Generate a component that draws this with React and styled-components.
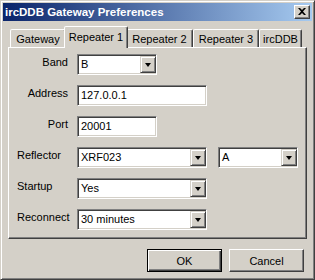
import React from 'react';
import styled, { createGlobalStyle } from 'styled-components';

const Global = createGlobalStyle`
  html, body { margin: 0; padding: 0; background: #d4d0c8; }
  * { box-sizing: border-box; }
`;

const Window = styled.div`
  width: 315px;
  height: 280px;
  background: #d4d0c8;
  border: 1px solid;
  border-color: #d4d0c8 #404040 #404040 #d4d0c8;
  box-shadow: inset 1px 1px #fff, inset -1px -1px #808080;
  padding: 2px;
  display: flex;
  flex-direction: column;
  font-family: "Liberation Sans", Arial, sans-serif;
  font-size: 11px;
  color: #000;
`;

const TitleBar = styled.div`
  height: 18px;
  display: flex;
  align-items: center;
  justify-content: space-between;
  padding: 0 2px;
  background: linear-gradient(to right, #0a246a, #a6caf0);
  color: #fff;
  font-weight: bold;
  font-size: 11.5px;
  flex-shrink: 0;
`;

const CloseButton = styled.div`
  width: 16px;
  height: 14px;
  background: #d4d0c8;
  border: 1px solid;
  border-color: #fff #404040 #404040 #fff;
  box-shadow: inset -1px -1px #808080;
  display: flex;
  align-items: center;
  justify-content: center;
  padding: 0 1px 1px 0;
`;

const Body = styled.div`
  flex: 1;
  padding: 5px 5px 0 5px;
  display: flex;
  flex-direction: column;
`;

const TabRow = styled.div`
  height: 21px;
  display: flex;
  align-items: flex-end;
  padding-left: 2px;
`;

const Tab = styled.div`
  position: relative;
  width: ${p => p.$w}px;
  height: ${p => (p.$active ? 22 : 18)}px;
  margin: ${p => (p.$active ? '0 -2px -1px' : '0')};
  z-index: ${p => (p.$active ? 2 : 1)};
  background: #d4d0c8;
  border: 1px solid;
  border-bottom: none;
  border-color: #fff #404040 transparent #fff;
  border-radius: 2px 2px 0 0;
  box-shadow: inset -1px 0 #808080;
  display: flex;
  align-items: center;
  justify-content: center;
  padding-bottom: ${p => (p.$active ? 2 : 0)}px;
`;

const Panel = styled.div`
  height: 192px;
  border: 1px solid;
  border-color: #fff #404040 #404040 #fff;
  box-shadow: inset -1px -1px #808080;
  padding: 6px 0 0 8px;
  display: grid;
  grid-template-columns: 51px auto;
  column-gap: 9px;
  row-gap: 10px;
  align-content: start;
`;

const Label = styled.div`
  text-align: ${p => (p.$left ? 'left' : 'right')};
  padding-top: 2px;
  line-height: 13px;
`;

const FieldRow = styled.div`
  display: flex;
  gap: 11px;
`;

const Sunken = styled.div`
  width: ${p => p.$w}px;
  height: 21px;
  background: #fff;
  border: 1px solid;
  border-color: #808080 #fff #fff #808080;
  box-shadow: inset 1px 1px #404040, inset -1px -1px #d4d0c8;
  display: flex;
  align-items: center;
  padding: 2px 2px 2px 3px;
`;

const Value = styled.span`
  flex: 1;
  line-height: 13px;
`;

const DropButton = styled.div`
  width: 16px;
  height: 17px;
  margin-right: -2px;
  background: #d4d0c8;
  border: 1px solid;
  border-color: #d4d0c8 #404040 #404040 #d4d0c8;
  box-shadow: inset 1px 1px #fff, inset -1px -1px #808080;
  display: flex;
  align-items: center;
  justify-content: center;
  &::after {
    content: '';
    border-style: solid;
    border-width: 4px 3.5px 0 3.5px;
    border-color: #000 transparent transparent transparent;
  }
`;

const ButtonRow = styled.div`
  display: flex;
  justify-content: flex-end;
  gap: 7px;
  margin: 10px 3px 0 0;
`;

const Button = styled.div`
  width: 75px;
  height: 23px;
  display: flex;
  align-items: center;
  justify-content: center;
  border: 1px solid;
  border-color: ${p => (p.$default ? '#000' : '#fff #404040 #404040 #fff')};
  box-shadow: ${p =>
    p.$default
      ? 'inset 1px 1px #fff, inset -1px -1px #404040, inset -2px -2px #808080'
      : 'inset -1px -1px #808080'};
`;

const TextField = ({ w, value }) => (
  <Sunken $w={w}><Value>{value}</Value></Sunken>
);

const Combo = ({ w, value }) => (
  <Sunken $w={w}><Value>{value}</Value><DropButton /></Sunken>
);

const tabs = [
  { name: 'Gateway', w: 56 },
  { name: 'Repeater 1', w: 64, active: true },
  { name: 'Repeater 2', w: 67 },
  { name: 'Repeater 3', w: 66 },
  { name: 'ircDDB', w: 43 },
];

export default function App() {
  return (
    <>
      <Global />
      <Window>
        <TitleBar>
          <span>ircDDB Gateway Preferences</span>
          <CloseButton>
            <svg width="8" height="7" viewBox="0 0 8 7">
              <path d="M0 0h2l2 2 2-2h2L5 3.5 8 7H6L4 5 2 7H0l3-3.5z" fill="#000" />
            </svg>
          </CloseButton>
        </TitleBar>
        <Body>
          <TabRow>
            {tabs.map(t => (
              <Tab key={t.name} $w={t.w} $active={t.active}>{t.name}</Tab>
            ))}
          </TabRow>
          <Panel>
            <Label>Band</Label>
            <FieldRow><Combo w={80} value="B" /></FieldRow>
            <Label>Address</Label>
            <FieldRow><TextField w={130} value="127.0.0.1" /></FieldRow>
            <Label>Port</Label>
            <FieldRow><TextField w={80} value="20001" /></FieldRow>
            <Label $left>Reflector</Label>
            <FieldRow>
              <Combo w={130} value="XRF023" />
              <Combo w={80} value="A" />
            </FieldRow>
            <Label $left>Startup</Label>
            <FieldRow><Combo w={130} value="Yes" /></FieldRow>
            <Label $left>Reconnect</Label>
            <FieldRow><Combo w={130} value="30 minutes" /></FieldRow>
          </Panel>
          <ButtonRow>
            <Button $default>OK</Button>
            <Button>Cancel</Button>
          </ButtonRow>
        </Body>
      </Window>
    </>
  );
}
